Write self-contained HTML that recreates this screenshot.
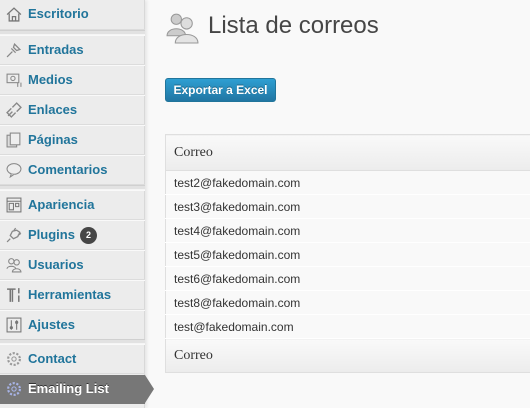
<!DOCTYPE html>
<html><head><meta charset="utf-8">
<style>
*{margin:0;padding:0;box-sizing:border-box}
body{width:530px;height:408px;overflow:hidden;background:#f9f9f9;font-family:"Liberation Sans",sans-serif;position:relative}
#side{position:absolute;left:0;top:0;width:145px;height:408px;background:#ececec;border-right:1px solid #d8d8d8;box-shadow:2px 0 3px rgba(0,0,0,.08)}
.it{position:absolute;left:0;width:145px;height:30px;border-top:1px solid #f9f9f9;border-bottom:1px solid #dcdcdc;font-weight:bold;font-size:13px;color:#21759b;line-height:28px;padding-left:28px}
.ic{position:absolute;left:6px;top:6px;width:16px;height:16px}
.sep{position:absolute;left:0;width:145px;height:5px;background:#e2e2e2;border-top:1px solid #d0d0d0;border-bottom:1px solid #f5f5f5}
.badge{display:inline-block;background:#464646;color:#fff;border-radius:9px;width:17px;height:17px;font-size:9px;line-height:17px;text-align:center;vertical-align:1px;margin-left:5px}
.act{background:#777;color:#fff;border:none;text-shadow:0 -1px 0 #333}
.arrow{position:absolute;left:145px;top:375px;width:0;height:0;border-top:14px solid transparent;border-bottom:14px solid transparent;border-left:9px solid #777}
h2{position:absolute;left:208px;top:12px;font-size:24px;font-weight:normal;color:#464646;font-family:"Liberation Sans",sans-serif}
.btn{position:absolute;left:165px;top:78px;width:111px;height:24px;border-radius:3px;background:linear-gradient(#2e9fd2,#2176a3);border:1px solid #21759b;color:#fff;font-size:12px;font-weight:bold;text-align:center;line-height:22px;text-shadow:0 -1px 0 rgba(0,0,0,.3)}
table{position:absolute;left:165px;top:134px;width:370px;border-collapse:collapse;border:1px solid #dfdfdf;background:#f9f9f9}
th{height:36px;text-align:left;font-family:"Liberation Serif",serif;font-weight:normal;font-size:14px;color:#333;padding-left:8px;background:linear-gradient(#f9f9f9,#ececec)}
td{height:24px;font-size:12px;color:#333;padding-left:8px;border-top:1px solid #dfdfdf;border-bottom:1px solid #fff}
tfoot th{height:34px;border-top:1px solid #dfdfdf}
</style></head><body>
<div id="side">
<div class="it" style="top:0;border-top:none"><svg class="ic" viewBox="0 0 15 15"><path d="M1 8L7.5 2 14 8M3 7v7h9V7M6 14v-4h3v4" fill="none" stroke="#777" stroke-width="1.2"/></svg>Escritorio</div>
<div class="sep" style="top:30px"></div>
<div class="it" style="top:35px"><svg class="ic" viewBox="0 0 15 15"><path d="M1 14l5-5M5 6l4 4M8 2l5 5-3 1-3-3z" fill="none" stroke="#888" stroke-width="1.2"/></svg>Entradas</div>
<div class="it" style="top:65px"><svg class="ic" viewBox="0 0 15 15"><rect x="1" y="2" width="11" height="8" fill="none" stroke="#888"/><circle cx="6.5" cy="6" r="2" fill="none" stroke="#888"/><path d="M11 10v4M14 10v4" stroke="#888"/></svg>Medios</div>
<div class="it" style="top:95px"><svg class="ic" viewBox="0 0 15 15"><path d="M2 13l4-4M6 5l4-4 4 4-4 4M9 10l-4 4-4-4 4-4" fill="none" stroke="#888" stroke-width="1.3"/></svg>Enlaces</div>
<div class="it" style="top:125px"><svg class="ic" viewBox="0 0 15 15"><rect x="1" y="3" width="9" height="11" fill="#ddd" stroke="#888"/><rect x="4" y="1" width="9" height="11" fill="#eee" stroke="#888"/></svg>Páginas</div>
<div class="it" style="top:155px"><svg class="ic" viewBox="0 0 15 15"><ellipse cx="7.5" cy="6.5" rx="6.5" ry="5" fill="#eee" stroke="#888"/><path d="M5 11l-1 3 3-2" fill="#eee" stroke="#888"/></svg>Comentarios</div>
<div class="sep" style="top:185px"></div>
<div class="it" style="top:190px"><svg class="ic" viewBox="0 0 15 15"><rect x="1" y="1" width="13" height="13" fill="none" stroke="#777"/><path d="M1 4h13M3 6h4v6H3zM9 6h3v3H9z" fill="none" stroke="#777"/></svg>Apariencia</div>
<div class="it" style="top:220px"><svg class="ic" viewBox="0 0 15 15"><path d="M1 14l3-3M4 8l3 3 4-2 2-4-3-2-4 1zM9 1l-2 3M14 6l-3 2" fill="none" stroke="#888" stroke-width="1.2"/></svg>Plugins<span class="badge">2</span></div>
<div class="it" style="top:250px"><svg class="ic" viewBox="0 0 15 15"><circle cx="5" cy="4" r="2.5" fill="none" stroke="#888"/><circle cx="10" cy="5" r="2.5" fill="none" stroke="#888"/><path d="M1 11c0-3 8-3 8 0M6 14c0-4 8-4 8 0z" fill="#eee" stroke="#888"/></svg>Usuarios</div>
<div class="it" style="top:280px"><svg class="ic" viewBox="0 0 15 15"><path d="M1 2h8M4 2v12M6 2v12M12 1v5M12 8v6" fill="none" stroke="#777" stroke-width="1.4"/></svg>Herramientas</div>
<div class="it" style="top:310px"><svg class="ic" viewBox="0 0 15 15"><rect x="1" y="1" width="13" height="13" fill="none" stroke="#777"/><path d="M5 3v9M10 3v9" stroke="#777"/><circle cx="5" cy="10" r="1.5" fill="#777"/><circle cx="10" cy="5" r="1.5" fill="#777"/></svg>Ajustes</div>
<div class="sep" style="top:339px"></div>
<div class="it" style="top:344px"><svg class="ic" viewBox="0 0 15 15"><circle cx="7.5" cy="7.5" r="5.5" fill="none" stroke="#999" stroke-width="2" stroke-dasharray="2 1.5"/><circle cx="7.5" cy="7.5" r="2" fill="none" stroke="#999"/></svg>Contact</div>
<div class="it act" style="top:375px;height:29px"><svg class="ic" viewBox="0 0 15 15"><circle cx="7.5" cy="7.5" r="5.5" fill="none" stroke="#a8b4e8" stroke-width="2" stroke-dasharray="2 1.5"/><circle cx="7.5" cy="7.5" r="2" fill="none" stroke="#a8b4e8"/></svg>Emailing List</div>
</div>
<div class="arrow"></div>
<svg style="position:absolute;left:166px;top:11px" width="33" height="33" viewBox="0 0 32 32"><circle cx="10" cy="8" r="5" fill="#ccc" stroke="#999"/><path d="M1 24c0-9 18-9 18 0z" fill="#ccc" stroke="#999"/><circle cx="20" cy="12" r="5.5" fill="#ddd" stroke="#999"/><path d="M9 31c0-11 22-11 22 0z" fill="#e4e4e4" stroke="#999"/></svg>
<h2>Lista de correos</h2>
<div class="btn">Exportar a Excel</div>
<table>
<thead><tr><th>Correo</th></tr></thead>
<tbody>
<tr><td>test2@fakedomain.com</td></tr>
<tr><td>test3@fakedomain.com</td></tr>
<tr><td>test4@fakedomain.com</td></tr>
<tr><td>test5@fakedomain.com</td></tr>
<tr><td>test6@fakedomain.com</td></tr>
<tr><td>test8@fakedomain.com</td></tr>
<tr><td>test@fakedomain.com</td></tr>
</tbody>
<tfoot><tr><th>Correo</th></tr></tfoot>
</table>
</body></html>
